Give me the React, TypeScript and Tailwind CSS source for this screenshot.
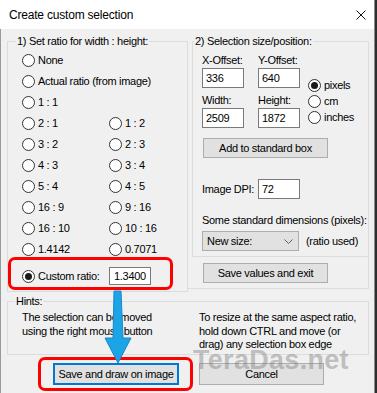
import React from "react";

// "Create custom selection" dialog, WinForms look, with the red/blue annotations on top.

const ratioRows: string[][] = [
    ["None"],
    ["Actual ratio (from image)"],
    ["1 : 1"],
    ["2 : 1", "1 : 2"],
    ["3 : 2", "2 : 3"],
    ["4 : 3", "3 : 4"],
    ["5 : 4", "4 : 5"],
    ["16 : 9", "9 : 16"],
    ["16 : 10", "10 : 16"],
    ["1.4142", "0.7071"],
];

function Radio({ label, checked }: { label: string; checked?: boolean }) {
    return (
        <div className="flex items-center gap-[3px]">
            <span className="flex h-[13px] w-[13px] shrink-0 items-center justify-center rounded-full border border-[#333] bg-white">
                {checked && <span className="h-[7px] w-[7px] rounded-full bg-[#1a1a1a]" />}
            </span>
            <span className="whitespace-nowrap">{label}</span>
        </div>
    );
}

function TextBox({ value, h = "h-[20px]" }: { value: string; h?: string }) {
    return (
        <div className={`flex w-[42px] items-center border border-[#7a7a7a] bg-white pl-[3px] ${h}`}>
            {value}
        </div>
    );
}

function Btn({ label, className }: { label: string; className?: string }) {
    return (
        <div
            className={`flex items-center justify-center border border-[#adadad] bg-[#e1e1e1] ${className ?? ""}`}
        >
            {label}
        </div>
    );
}

export default function App() {
    return (
        <div className="relative h-[393px] w-[377px] overflow-hidden bg-[#2e2e2e] font-['Liberation_Sans',Arial,sans-serif] text-[11px] tracking-[-0.3px] text-black">
            <div className="flex h-[393px] w-[375px] flex-col border-r border-[#8c8c8c] bg-[#f0f0f0]">
                {/* title bar */}
                <div className="flex h-[29px] shrink-0 items-center justify-between bg-white pl-[9px] pr-[8px]">
                    <span className="text-[12px] tracking-[-0.2px]">Create custom selection</span>
                    <svg width="10" height="10" viewBox="0 0 10 10">
                        <path d="M0.5 0.5 L9.5 9.5 M9.5 0.5 L0.5 9.5" stroke="#111" strokeWidth="1" />
                    </svg>
                </div>

                {/* body */}
                <div className="flex-1 border-l border-[#9a9a9a] pl-[6px] pt-[6px]">
                    <div className="flex">
                        {/* group 1 */}
                        <fieldset className="h-[257px] w-[181px] border border-[#dcdcdc] p-0">
                            <legend className="ml-[8px] px-[1px] leading-[12px]">
                                1) Set ratio for width : height:
                            </legend>
                            <div className="pt-[3px]">
                                {ratioRows.map((row) => (
                                    <div key={row[0]} className="flex h-[21px] items-center pl-[14px]">
                                        <div className="w-[87px]">
                                            <Radio label={row[0]} />
                                        </div>
                                        {row[1] && <Radio label={row[1]} />}
                                    </div>
                                ))}
                                <div className="mt-[4px] flex h-[24px] items-center pl-[14px]">
                                    <div className="w-[87px]">
                                        <Radio label="Custom ratio:" checked />
                                    </div>
                                    <div className="flex h-[18px] w-[42px] items-center border border-[#7a7a7a] bg-white pl-[4px]">
                                        1.3400
                                    </div>
                                </div>
                            </div>
                        </fieldset>

                        {/* right column */}
                        <div className="w-[181px]">
                            <fieldset className="ml-[4px] h-[222px] w-[177px] border border-[#dcdcdc] p-0">
                                <legend className="ml-[1px] px-[1px] leading-[12px]">
                                    2) Selection size/position:
                                </legend>
                                <div className="pl-[9px]">
                                    <div className="flex">
                                        <div className="w-[106px]">
                                            <div className="mt-[7px] flex h-[13px] leading-[13px]">
                                                <span className="w-[56px]">X-Offset:</span>
                                                <span>Y-Offset:</span>
                                            </div>
                                            <div className="mt-[1px] flex gap-[14px]">
                                                <TextBox value="336" />
                                                <TextBox value="640" />
                                            </div>
                                            <div className="mt-[6px] flex h-[13px] leading-[13px]">
                                                <span className="w-[56px]">Width:</span>
                                                <span>Height:</span>
                                            </div>
                                            <div className="mt-[1px] flex gap-[14px]">
                                                <TextBox value="2509" />
                                                <TextBox value="1872" />
                                            </div>
                                        </div>
                                        <div className="mt-[30px]">
                                            <div className="flex h-[16px] items-center">
                                                <Radio label="pixels" checked />
                                            </div>
                                            <div className="flex h-[16px] items-center">
                                                <Radio label="cm" />
                                            </div>
                                            <div className="flex h-[16px] items-center">
                                                <Radio label="inches" />
                                            </div>
                                        </div>
                                    </div>
                                    <Btn label="Add to standard box" className="ml-[1px] mt-[10px] h-[20px] w-[125px]" />
                                    <div className="mt-[21px] flex h-[20px] items-center">
                                        <span className="w-[56px]">Image DPI:</span>
                                        <TextBox value="72" />
                                    </div>
                                    <div className="mt-[15px] h-[13px] whitespace-nowrap leading-[13px]">
                                        Some standard dimensions (pixels):
                                    </div>
                                    <div className="mt-[4px] flex h-[20px] items-center">
                                        <div className="flex h-[20px] w-[97px] items-center justify-between border border-[#adadad] bg-[#e1e1e1] pl-[4px] pr-[5px]">
                                            <span>New size:</span>
                                            <svg width="9" height="5" viewBox="0 0 9 5">
                                                <path d="M0.5 0.5 L4.5 4.5 L8.5 0.5" fill="none" stroke="#606060" strokeWidth="1" />
                                            </svg>
                                        </div>
                                        <span className="ml-[7px]">(ratio used)</span>
                                    </div>
                                </div>
                            </fieldset>
                            <div className="h-[32px] w-[181px] border-b border-r border-[#dcdcdc] pl-[15px] pt-[6px]">
                                <Btn label="Save values and exit" className="h-[20px] w-[125px]" />
                            </div>
                        </div>
                    </div>

                    {/* hints */}
                    <fieldset className="mt-[3px] h-[60px] w-[362px] border border-[#dcdcdc] p-0">
                        <legend className="ml-[7px] px-[1px] leading-[12px]">Hints:</legend>
                        <div className="mt-[4px] flex leading-[13.5px]">
                            <div className="w-[191px] pl-[14px]">
                                The selection can be moved
                                <br />
                                using the right mouse button
                            </div>
                            <div className="whitespace-nowrap">
                                To resize at the same aspect ratio,
                                <br />
                                hold down CTRL and move (or
                                <br />
                                drag) any selection box edge
                            </div>
                        </div>
                    </fieldset>

                    {/* dialog buttons */}
                    <div className="mt-[8px] flex gap-[20px] pl-[46px]">
                        <div className="flex h-[22px] w-[126px] items-center justify-center border-2 border-[#0078d7] bg-[#e1e1e1]">
                            Save and draw on image
                        </div>
                        <Btn label="Cancel" className="h-[22px] w-[125px]" />
                    </div>
                </div>
            </div>

            {/* annotations */}
            <div className="pointer-events-none absolute left-[193px] top-[347px] whitespace-nowrap text-[27px] font-bold leading-[27px] tracking-[0.3px] text-[#808080]/45">
                TeraDas.net
            </div>
            <div className="pointer-events-none absolute left-[8px] top-[257px] h-[33px] w-[165px] rounded-[7px] border-[3px] border-[#ff0000]" />
            <div className="pointer-events-none absolute left-[38px] top-[357px] h-[34px] w-[155px] rounded-[7px] border-[3px] border-[#ff0000]" />
            <svg
                className="pointer-events-none absolute left-[100px] top-[290px]"
                width="36"
                height="76"
                viewBox="0 0 36 76"
            >
                <path
                    d="M14 1 L21 1 L23 48 L31 48 L18 73 L5 48 L13 48 Z"
                    fill="#1ba4e6"
                    stroke="#1a86c8"
                    strokeWidth="1"
                    strokeLinejoin="round"
                />
            </svg>
        </div>
    );
}
